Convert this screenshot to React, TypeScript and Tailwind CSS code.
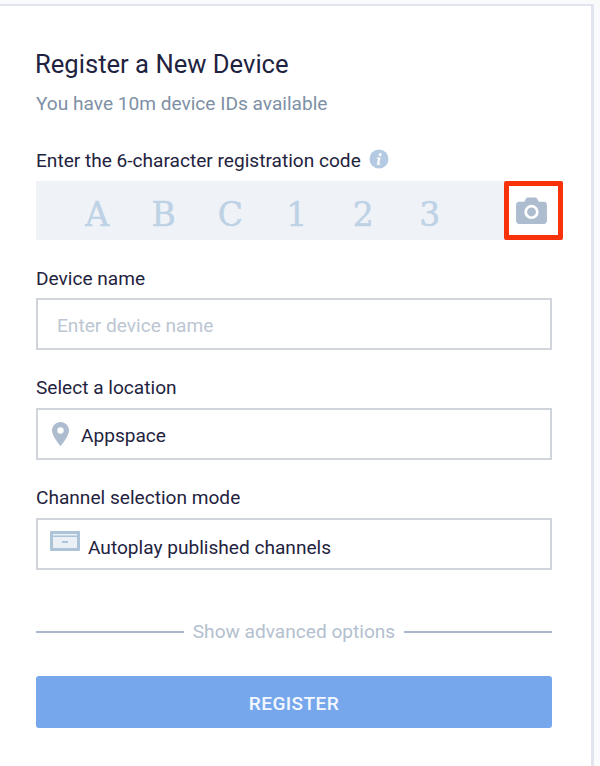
const CODE_CHARS = ["A", "B", "C", "1", "2", "3"];

const fieldClass =
  "flex h-[52px] w-[516px] items-center border-2 border-[#d0d5dc] bg-white text-[19.1px] text-[#1f2340]";
const labelClass = "text-[19.1px] leading-[20px] text-[#1f2340]";

function InfoIcon() {
  return (
    <svg width="20" height="20" viewBox="0 0 20 20" className="mb-[4px]">
      <circle cx="10" cy="10" r="9.5" fill="#b4cae2" />
      <circle cx="11.2" cy="5.4" r="1.5" fill="#fff" />
      <path d="M8 8.6h3.6l-1.5 6h1.4l-.3 1.2H7.7l1.5-6H7.7z" fill="#fff" />
    </svg>
  );
}

function CameraIcon() {
  return (
    <svg width="31" height="27" viewBox="0 0 32 28" className="mr-[5px] mb-[1px]">
      <path
        d="M3 5h5.500l1.800-3.400C10.700 1 11.300.6 12 .6h8c.7 0 1.300.4 1.700 1L23.500 5H29c1.600 0 3 1.400 3 3v17c0 1.600-1.400 3-3 3H3c-1.600 0-3-1.400-3-3V8c0-1.600 1.400-3 3-3z"
        fill="#adbccf"
      />
      <circle cx="16" cy="15.500" r="6" fill="none" stroke="#fff" strokeWidth="2.800" />
    </svg>
  );
}

function PinIcon() {
  return (
    <svg width="17" height="24" viewBox="0 0 17 24">
      <path
        d="M8.500 0C3.800 0 0 3.800 0 8.400 0 14 8.500 24 8.500 24S17 14 17 8.400C17 3.800 13.200 0 8.500 0z"
        fill="#adbccf"
      />
      <circle cx="8.500" cy="8.500" r="3.200" fill="#fff" />
    </svg>
  );
}

function ChannelIcon() {
  return (
    <svg width="30" height="20" viewBox="0 0 30 20" className="mb-[6px]">
      <rect width="30" height="20" rx="1" fill="#adc3d8" />
      <rect x="3" y="3" width="24" height="1.500" fill="#eaf0f6" />
      <rect x="3" y="6" width="24" height="11" fill="#eaf0f6" />
      <rect x="12" y="10" width="6" height="2" fill="#adc3d8" />
    </svg>
  );
}

export default function App() {
  return (
    <div className="h-[766px] w-[600px] overflow-hidden bg-[#f9fafc] font-['Roboto',sans-serif]">
      <div className="ml-[-4px] mt-[4px] h-[800px] w-[598px] border-[2px] border-r-[3px] border-[#e1e5f0] bg-white pl-[38px] pt-[41px]">
        <h1 className="ml-[-1px] text-[25.6px] leading-[34px] text-[#1f2340]">Register a New Device</h1>
        <p className="mt-[11px] text-[19.1px] leading-[24px] text-[#7e90a5]">
          You have 10m device IDs available
        </p>

        <div className="mt-[33px] flex h-[24px] items-center gap-[8px]">
          <span className={labelClass}>Enter the 6-character registration code</span>
          <InfoIcon />
        </div>
        <div className="mt-[8px] flex h-[59px] items-stretch">
          <div className="flex w-[468px] items-center bg-[#eff3f8] pl-[28px] pt-[8px]">
            {CODE_CHARS.map((c) => (
              <span
                key={c}
                className="w-[66.5px] text-center font-['DejaVu_Serif',serif] text-[33px] leading-none text-[#bed2e6] [-webkit-text-stroke:0.5px_#bed2e6]"
              >
                {c}
              </span>
            ))}
          </div>
          <div className="flex w-[59px] items-center justify-center rounded-[2px] border-[5px] border-[#f8320b] bg-white">
            <CameraIcon />
          </div>
        </div>

        <div className={`${labelClass} mt-[29px]`}>Device name</div>
        <div className={`${fieldClass} mt-[9px] pl-[19px] pt-[5px] text-[#bcc6d2]`}>Enter device name</div>

        <div className={`${labelClass} mt-[28px]`}>Select a location</div>
        <div className={`${fieldClass} mt-[10px] pl-[14px]`}>
          <div className="mb-[1px]">
            <PinIcon />
          </div>
          <span className="ml-[12px] pt-[5px]">Appspace</span>
        </div>

        <div className={`${labelClass} mt-[28px]`}>Channel selection mode</div>
        <div className={`${fieldClass} mt-[10px] pl-[12px]`}>
          <ChannelIcon />
          <span className="ml-[8px] pt-[9px]">Autoplay published channels</span>
        </div>

        <div className="mt-[50px] flex h-[24px] w-[516px] items-center gap-[9px]">
          <div className="h-[2px] flex-1 bg-[#a9b8ca]" />
          <span className="text-[19.1px] text-[#b3c0cf]">Show advanced options</span>
          <div className="h-[2px] flex-1 bg-[#a9b8ca]" />
        </div>

        <button className="mt-[32px] h-[52px] w-[516px] rounded-[3px] bg-[#76a7ec] pt-[5px] text-[19.1px] font-medium tracking-[0.4px] text-[#f4f8fe]">
          REGISTER
        </button>
      </div>
    </div>
  );
}
